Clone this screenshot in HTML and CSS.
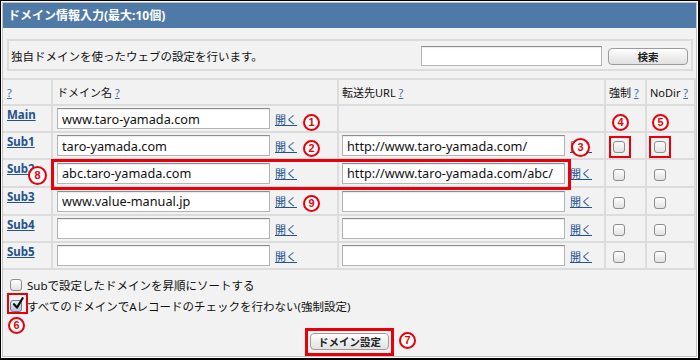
FILE: index.html
```html
<!DOCTYPE html>
<html lang="ja">
<head>
<meta charset="utf-8">
<title>ドメイン情報入力</title>
<link rel="stylesheet" href="styles.css">
</head>
<body>
<div class="frame">
  <div class="panel">
    <div class="title">ドメイン情報入力(最大:10個)</div>
    <div class="desc">
      <span class="desc-text">独自ドメインを使ったウェブの設定を行います。</span>
      <input class="field search" type="text" value="">
      <button class="btn btn-search">検索</button>
    </div>
    <table class="grid">
      <tr class="head">
        <th class="c1"><a class="q" href="#">?</a></th>
        <th class="c2">ドメイン名 <a class="q" href="#">?</a></th>
        <th class="c3">転送先URL <a class="q" href="#">?</a></th>
        <th class="c4">強制 <a class="q" href="#">?</a></th>
        <th class="c5">NoDir <a class="q" href="#">?</a></th>
      </tr>
      <tr class="r27">
        <td class="c1"><a class="name" href="#">Main</a></td>
        <td class="c2"><input class="field dom" type="text" value="www.taro-yamada.com"><a class="open" href="#">開く</a></td>
        <td class="c3"></td>
        <td class="c4"></td>
        <td class="c5"></td>
      </tr>
      <tr class="r27">
        <td class="c1"><a class="name" href="#">Sub1</a></td>
        <td class="c2"><input class="field dom" type="text" value="taro-yamada.com"><a class="open" href="#">開く</a></td>
        <td class="c3"><input class="field url" type="text" value="http://www.taro-yamada.com/"><a class="open" href="#">開く</a></td>
        <td class="c4"><span class="cb"></span></td>
        <td class="c5"><span class="cb"></span></td>
      </tr>
      <tr class="r28">
        <td class="c1"><a class="name" href="#">Sub2</a></td>
        <td class="c2"><input class="field dom" type="text" value="abc.taro-yamada.com"><a class="open" href="#">開く</a></td>
        <td class="c3"><input class="field url" type="text" value="http://www.taro-yamada.com/abc/"><a class="open" href="#">開く</a></td>
        <td class="c4"><span class="cb"></span></td>
        <td class="c5"><span class="cb"></span></td>
      </tr>
      <tr class="r28">
        <td class="c1"><a class="name" href="#">Sub3</a></td>
        <td class="c2"><input class="field dom" type="text" value="www.value-manual.jp"><a class="open" href="#">開く</a></td>
        <td class="c3"><input class="field url" type="text" value=""><a class="open" href="#">開く</a></td>
        <td class="c4"><span class="cb"></span></td>
        <td class="c5"><span class="cb"></span></td>
      </tr>
      <tr class="r27">
        <td class="c1"><a class="name" href="#">Sub4</a></td>
        <td class="c2"><input class="field dom" type="text" value=""><a class="open" href="#">開く</a></td>
        <td class="c3"><input class="field url" type="text" value=""><a class="open" href="#">開く</a></td>
        <td class="c4"><span class="cb"></span></td>
        <td class="c5"><span class="cb"></span></td>
      </tr>
      <tr class="r27">
        <td class="c1"><a class="name" href="#">Sub5</a></td>
        <td class="c2"><input class="field dom" type="text" value=""><a class="open" href="#">開く</a></td>
        <td class="c3"><input class="field url" type="text" value=""><a class="open" href="#">開く</a></td>
        <td class="c4"><span class="cb"></span></td>
        <td class="c5"><span class="cb"></span></td>
      </tr>
    </table>
    <div class="options">
      <label class="opt"><span class="cb"></span><span>Subで設定したドメインを昇順にソートする</span></label>
      <label class="opt"><span class="cb checked"><svg viewBox="0 0 14 14" width="14" height="14"><path d="M3 7.2 L6 10.6 L11.6 1.2" fill="none" stroke="#111" stroke-width="2.2" stroke-linecap="round" stroke-linejoin="round"/></svg></span><span class="opt-text2">すべてのドメインでAレコードのチェックを行わない(強制設定)</span></label>
    </div>
    <div class="actions">
      <button class="btn btn-submit">ドメイン設定</button>
    </div>
  </div>

  <span class="mark box4"></span>
  <span class="mark box5"></span>
  <span class="mark box6"></span>
  <span class="mark box7"></span>
  <span class="mark box8"></span>

  <span class="num n1">1</span>
  <span class="num n2">2</span>
  <span class="num n3">3</span>
  <span class="num n4">4</span>
  <span class="num n5">5</span>
  <span class="num n6">6</span>
  <span class="num n7">7</span>
  <span class="num n8">8</span>
  <span class="num n9">9</span>
</div>
</body>
</html>
```

FILE: styles.css
```css
* { box-sizing: border-box; }

body {
  margin: 0;
  background: #fff;
  font-family: "Noto Sans", "Noto Sans CJK JP", sans-serif;
  font-size: 11px;
  color: #111;
}

.frame {
  position: relative;
  width: 700px;
  height: 360px;
  border-style: solid;
  border-color: #000;
  border-width: 1px 2px 2px 1px;
  padding: 1px;
  background: #fff;
}

.panel {
  height: 100%;
  border: 1px solid #c4c4c4;
  background: #f2f2f2;
  display: flex;
  flex-direction: column;
}

.title {
  height: 25px;
  flex: none;
  background: #4f7aa8;
  color: #fff;
  font-weight: bold;
  font-size: 12px;
  line-height: 25px;
  padding-left: 5px;
}

.desc {
  flex: none;
  margin: 11px 3px 7px 4px;
  height: 32px;
  border: 2px solid #dcdcdc;
  display: flex;
  align-items: center;
  padding: 2px 3px 0 2px;
}

.desc-text { flex: 1; font-size: 11.5px; }

.field {
  height: 21px;
  margin: 0;
  padding: 0 4px;
  border: 1px solid #b4b4b4;
  border-top-color: #8c8c8c;
  background: #fff;
  font-family: "Noto Sans", "Noto Sans CJK JP", sans-serif;
  font-size: 12.7px;
  color: #111;
  box-shadow: inset 0 1px 1px rgba(0,0,0,0.08);
  outline: none;
  vertical-align: middle;
}

.search { width: 181px; height: 20px; margin-right: 6px; }
.dom { width: 213px; }
.url { width: 223px; }

.btn {
  margin: 0;
  padding: 0;
  height: 17px;
  border: 1px solid #9c9c9c;
  border-radius: 4px;
  background: linear-gradient(#ffffff, #ededed 55%, #e2e2e2);
  font-family: "Noto Sans CJK JP", sans-serif;
  font-weight: bold;
  font-size: 10.5px;
  line-height: 15px;
  color: #222;
}

.btn-search { width: 80px; }
.btn-submit { width: 79px; }

.grid {
  flex: none;
  border-collapse: separate;
  border-spacing: 0;
  table-layout: fixed;
  width: 693px;
}

.grid th, .grid td {
  border-right: 2px solid #dcdcdc;
  border-bottom: 2px solid #dcdcdc;
  padding: 0 3px;
  text-align: left;
  font-weight: normal;
  vertical-align: middle;
  white-space: nowrap;
  overflow: hidden;
}

.grid .head th { border-top: 2px solid #dcdcdc; height: 28px; }
.grid .r27 td { height: 27px; }
.grid .r28 td { height: 28px; }

.grid .c1 { width: 50px; padding-left: 4px; }
.grid .c2 { width: 286px; padding-left: 4px; }
.grid .c3 { width: 267px; }
.grid .c4 { width: 41px; }
.grid .c5 { width: 49px; }

.grid td.c1 { vertical-align: top; padding-top: 2px; line-height: 14px; }

a { color: #23528f; }
.q { color: #3a6ea8; }

.name { font-weight: bold; font-size: 11.5px; }

.open {
  margin-left: 5px;
  vertical-align: middle;
  font-family: "Noto Sans CJK JP", sans-serif;
}

.c3 .open { margin-left: 5px; }

.cb {
  display: inline-block;
  position: relative;
  width: 12px;
  height: 12px;
  border: 1px solid #8d8d8d;
  border-radius: 3px;
  background: linear-gradient(#fdfdfd, #e2e2e2);
  vertical-align: middle;
}

.grid .cb { margin-left: 4px; }

.cb.checked {
  background: linear-gradient(#e3ecf6, #b7c8dc);
  border-color: #6e7d90;
}

.cb.checked svg {
  position: absolute;
  left: 0;
  top: -4px;
}

.options {
  flex: none;
  padding: 4px 0 0 7px;
  display: flex;
  flex-direction: column;
}

.opt {
  display: flex;
  align-items: center;
  height: 21px;
  gap: 5px;
  font-size: 11.5px;
  font-family: "Noto Sans", "Noto Sans CJK JP", sans-serif;
}

.actions {
  flex: none;
  display: flex;
  justify-content: center;
  padding-top: 17px;
}

/* annotation overlays */
.mark {
  position: absolute;
  border: 2px solid #e8000b;
}

.box4 { left: 608px; top: 135px; width: 22px; height: 22px; }
.box5 { left: 648px; top: 135px; width: 22px; height: 22px; }
.box6 { left: 6px; top: 292px; width: 21px; height: 21px; }
.box7 { left: 304px; top: 327px; width: 89px; height: 28px; border-width: 3px; }
.box8 { left: 50px; top: 158px; width: 520px; height: 31px; border-width: 3px; }

.num {
  position: absolute;
  width: 17px;
  height: 17px;
  border: 2px solid #e8000b;
  border-radius: 50%;
  background: #fff;
  color: #e8000b;
  font-family: "Liberation Sans", sans-serif;
  font-weight: bold;
  font-size: 11px;
  line-height: 13px;
  text-align: center;
}

.n1 { left: 302px; top: 113px; }
.n2 { left: 302px; top: 139px; }
.n3 { left: 570px; top: 137px; width: 19px; height: 19px; line-height: 15px; }
.n4 { left: 611px; top: 113px; }
.n5 { left: 651px; top: 113px; }
.n6 { left: 7px; top: 316px; }
.n7 { left: 398px; top: 331px; }
.n8 { left: 27px; top: 165px; width: 19px; height: 19px; line-height: 15px; }
.n9 { left: 302px; top: 194px; }
```
